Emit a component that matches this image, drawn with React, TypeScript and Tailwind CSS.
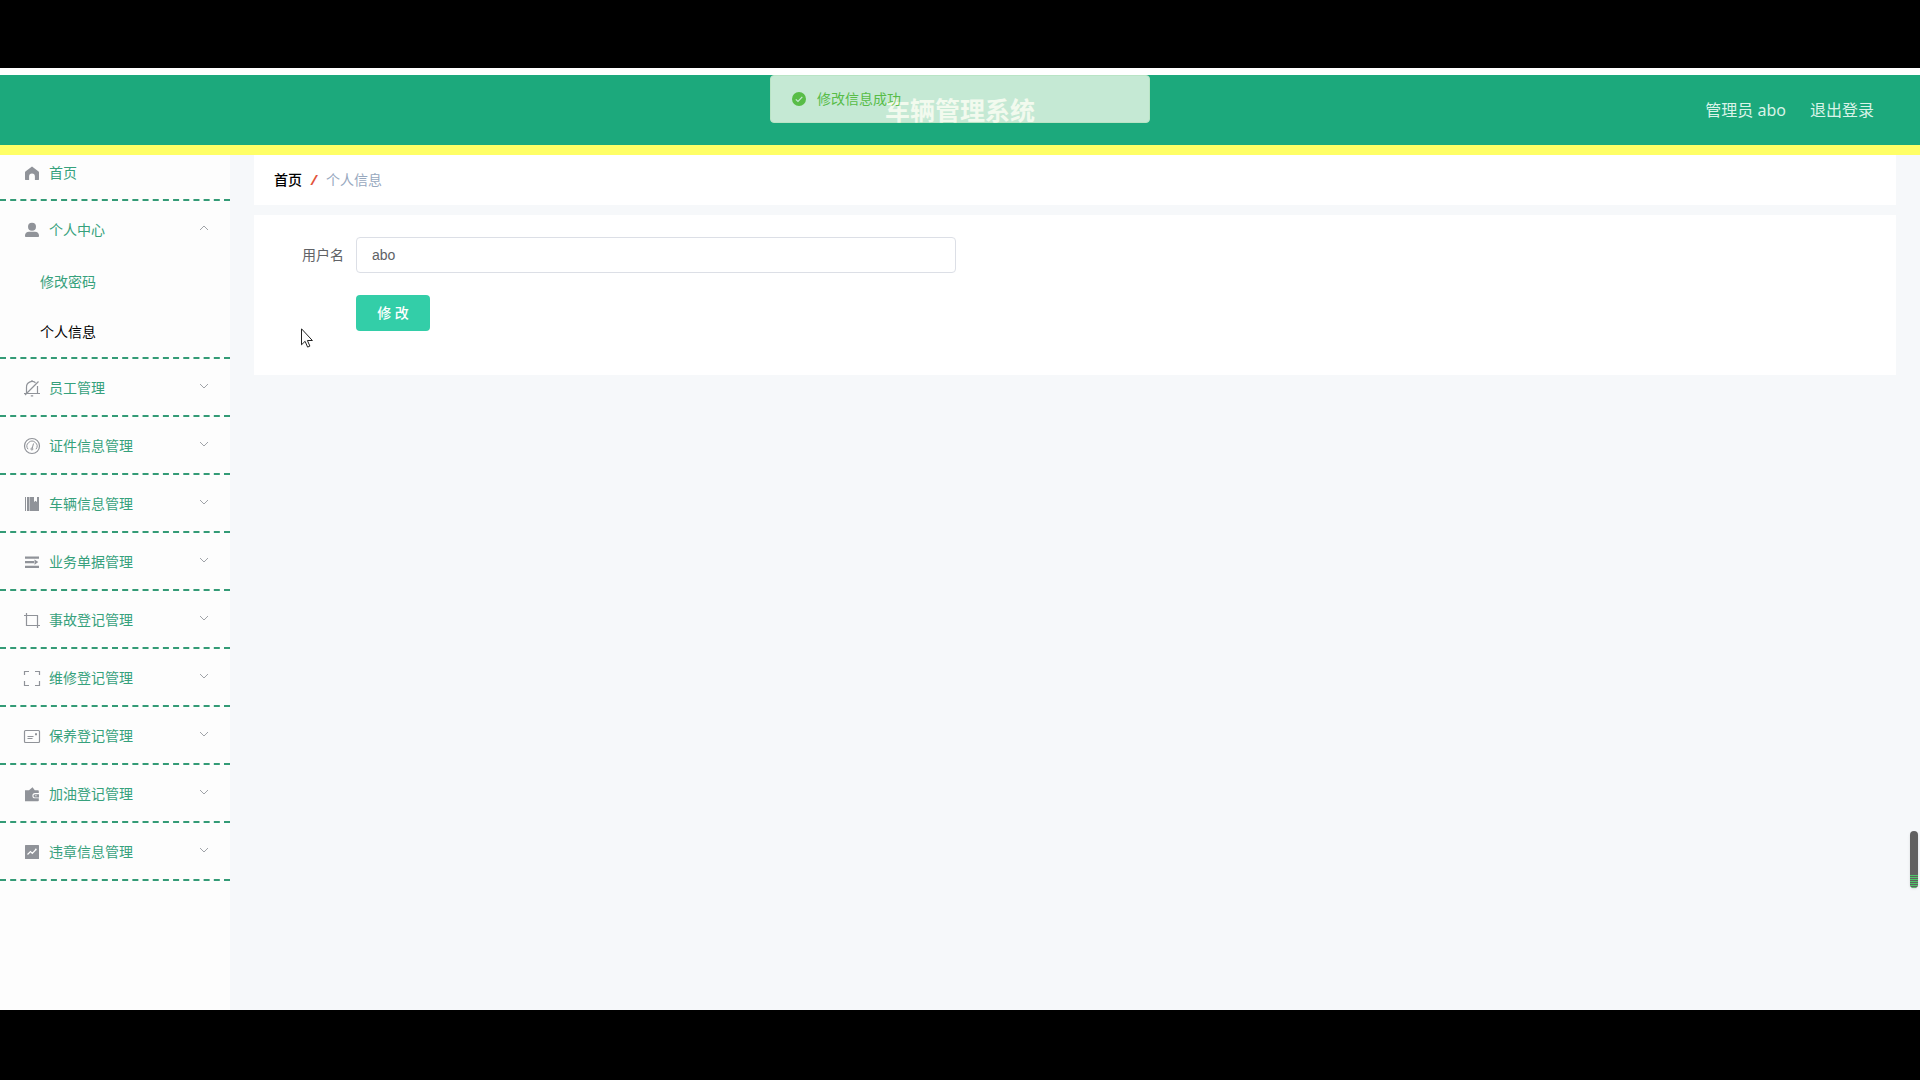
import type { ReactNode } from 'react';

const iconPaths: Record<string, ReactNode> = {
    home: <path fill="currentColor" d="M9 2.4l6.6 5.2c.3.3.4.5.4.9v6.9c0 .3-.2.5-.5.5h-3.6v-3.5a2.9 2.9 0 0 0-5.8 0v3.5H2.5c-.3 0-.5-.2-.5-.5V8.500c0-.4.1-.6.4-.9z" />,
    user: (
        <g fill="currentColor">
            <circle cx="9" cy="5.800" r="4" />
            <path d="M2 15.200v-.7C2 12 3.700 10.700 6 10.700h6c2.300 0 4 1.300 4 3.800v.7c0 .5-.3.8-.8.8H2.800c-.5 0-.8-.3-.8-.8z" />
        </g>
    ),
    bell: (
        <g fill="none" stroke="currentColor" strokeWidth="1.200">
            <path d="M3.500 14V8.200A5.500 5.500 0 0 1 12.500 3.800M14.500 7v7.500M1 14.500h16M7.800 16.800h2.400M9 2.500V1M2 16L15.500 2.500" />
        </g>
    ),
    gauge: (
        <g fill="none" stroke="currentColor">
            <circle cx="9" cy="9" r="7.500" strokeWidth="1.200" />
            <path d="M5 12.200A5 5 0 1 1 13 12.200M9.300 11L10.500 6.500" />
            <circle cx="8.900" cy="12" r="1" />
        </g>
    ),
    book: <path fill="currentColor" d="M2 2h1v14H2zM4 2h2v14H4zM6.500 2H11v5l1.500-1.200L14 7V2h2v14H6.500z" />,
    operation: <path fill="currentColor" d="M2 3.500h14v2.200H2zM2 8h9v2.200H2zM2 12.800h14V15H2zM11.500 6.500l3.800 2.600-3.800 2.600z" />,
    crop: <path fill="none" stroke="currentColor" strokeWidth="1.200" d="M1 4.500h13.500V17M3.500 2v12.500H17" />,
    full: <path fill="none" stroke="currentColor" strokeWidth="1.200" d="M1.500 6V2.500H6M12 2.500h4.500V6M16.500 12v4.500H12M6 16.500H1.500V12" />,
    postcard: (
        <g fill="none" stroke="currentColor" strokeWidth="1.200">
            <rect x="1.500" y="3.500" width="15" height="12" rx="1" />
            <path d="M4.500 9.500h6M4.500 11.500h5" />
            <path strokeWidth="2" d="M12 7.300h2" />
        </g>
    ),
    wallet: <path fill="currentColor" fillRule="evenodd" d="M2 5.300h4L9.500 2.300l2.300 3H15c.5 0 .8.300.8.800v2H12a2.600 2.600 0 0 0 0 5.200h3.800v2.200c0 .5-.3.800-.8.800H2zM12 9.200h4v3.200h-4a1.600 1.600 0 0 1 0-3.200zm.3 1v1.100h1.200v-1.100z" />,
    chart: (
        <g>
            <rect x="2" y="2" width="14" height="14" rx="0.500" fill="currentColor" />
            <path fill="none" stroke="#fff" strokeWidth="1.200" d="M4.500 11.500l3-3 1.800 1.800L12.500 7" />
            <circle cx="12.800" cy="6.500" r="0.900" fill="#fff" />
        </g>
    ),
};

const menus = [
    { icon: 'bell', label: '员工管理' },
    { icon: 'gauge', label: '证件信息管理' },
    { icon: 'book', label: '车辆信息管理' },
    { icon: 'operation', label: '业务单据管理' },
    { icon: 'crop', label: '事故登记管理' },
    { icon: 'full', label: '维修登记管理' },
    { icon: 'postcard', label: '保养登记管理' },
    { icon: 'wallet', label: '加油登记管理' },
    { icon: 'chart', label: '违章信息管理' },
];

function MenuIcon({ name }: { name: string }) {
    return (
        <span className="mr-[5px] flex w-6 shrink-0 justify-center text-[#909399]">
            <svg viewBox="0 0 18 18" className="size-[18px]">{iconPaths[name]}</svg>
        </span>
    );
}

function MenuButton({ icon, label, open = false }: { icon: string; label: string; open?: boolean }) {
    return (
        <button type="button" aria-expanded={open} className="flex h-14 w-full items-center px-5 pt-0.5 text-left">
            <MenuIcon name={icon} />
            <span className="grow">{label}</span>
            <svg viewBox="0 0 12 12" className="mb-1 size-3 text-[#a0a3a8]" fill="none" stroke="currentColor">
                <path d={open ? 'M2 8l4-4 4 4' : 'M2 4l4 4 4-4'} />
            </svg>
        </button>
    );
}

function Sidebar() {
    return (
        <nav className="w-[230px] shrink-0 bg-[#fdfdfd] text-sm text-[#36a17c]">
            <div className="border-b-2 border-dashed border-[#339b76]">
                <a href="#home" className="flex h-11 items-center px-5 pb-2">
                    <MenuIcon name="home" />
                    首页
                </a>
            </div>
            <div className="border-b-2 border-dashed border-[#339b76]">
                <MenuButton icon="user" label="个人中心" open />
                <a href="#password" className="flex h-[50px] items-center px-10">修改密码</a>
                <a href="#profile" className="flex h-[50px] items-center px-10 text-black">个人信息</a>
            </div>
            {menus.map((menu) => (
                <div key={menu.icon} className="border-b-2 border-dashed border-[#339b76]">
                    <MenuButton icon={menu.icon} label={menu.label} />
                </div>
            ))}
        </nav>
    );
}

function Header() {
    return (
        <header className="relative mt-[7px] flex h-20 shrink-0 items-center justify-end border-b-10 border-[#ffff66] bg-[#1ca97c] px-[46px] text-base text-[#d9f3e8]">
            <h1 className="absolute inset-x-0 pt-0.5 text-center text-[25px] font-bold text-white">车辆管理系统</h1>
            <div className="flex gap-6">
                <span>管理员 abo</span>
                <a href="#logout">退出登录</a>
            </div>
            {/* Success toast, caught while it fades out */}
            <div role="status" className="absolute top-0 left-1/2 flex h-12 w-[380px] -translate-x-1/2 items-center rounded border border-[#e1f3d8] bg-[#f0f9eb] px-5 text-sm text-[#67c23a] opacity-80">
                <svg viewBox="0 0 16 16" className="mr-2.5 size-4">
                    <circle cx="8" cy="8" r="7" fill="currentColor" />
                    <path d="M4.800 8.300l2.200 2.200 4.300-4.600" fill="none" stroke="#f0f9eb" strokeWidth="1.200" />
                </svg>
                修改信息成功
            </div>
        </header>
    );
}

export default function App() {
    return (
        <div className="relative flex h-screen flex-col overflow-hidden bg-black font-['Noto_Sans','Noto_Sans_CJK_SC',sans-serif]">
            <div className="h-[68px] shrink-0" />
            <div className="flex min-h-0 grow flex-col bg-white">
                <Header />
                <div className="flex min-h-0 grow overflow-hidden bg-[#f6f8fa]">
                    <Sidebar />
                    <main className="grow px-6 text-sm">
                        <nav aria-label="面包屑" className="mb-2.5 flex h-[50px] items-center gap-[9px] bg-white px-5">
                            <a href="#home" className="font-medium text-black">首页</a>
                            <span className="font-bold text-[#e2533a] italic">/</span>
                            <span className="text-[#97a8be]">个人信息</span>
                        </nav>
                        <form className="bg-white px-5 pt-[22px] pb-11" onSubmit={(e) => e.preventDefault()}>
                            <div className="mb-[22px] flex items-center">
                                <label htmlFor="username" className="w-[82px] pr-3 text-right text-[#606266]">用户名</label>
                                <input
                                    id="username"
                                    defaultValue="abo"
                                    className="h-9 w-[600px] rounded border border-[#dcdfe6] bg-white px-[15px] font-['Liberation_Sans',sans-serif] text-[#606266] outline-none"
                                />
                            </div>
                            <button type="submit" className="ml-[82px] block h-9 w-[74px] rounded bg-[#33cea8] font-medium text-white">修 改</button>
                        </form>
                    </main>
                </div>
            </div>
            <div className="h-[70px] shrink-0" />

            {/* Recorder level meter on the right edge */}
            <div className="absolute top-[831px] right-0.5 flex h-[57px] w-2 flex-col justify-end overflow-hidden rounded-full bg-[#606060] shadow">
                <div className="h-[13px] bg-[repeating-linear-gradient(to_bottom,#4fc468_0px,#4fc468_1px,#606060_1px,#606060_2px)]" />
            </div>
            <svg viewBox="0 0 13 20" className="absolute top-[328px] left-[301px] h-5 w-[13px]">
                <path d="M.5.800v16l3.600-3.500 2.500 5.800 2.300-1-2.500-5.600h5z" fill="#fff" stroke="#222" />
            </svg>
        </div>
    );
}
